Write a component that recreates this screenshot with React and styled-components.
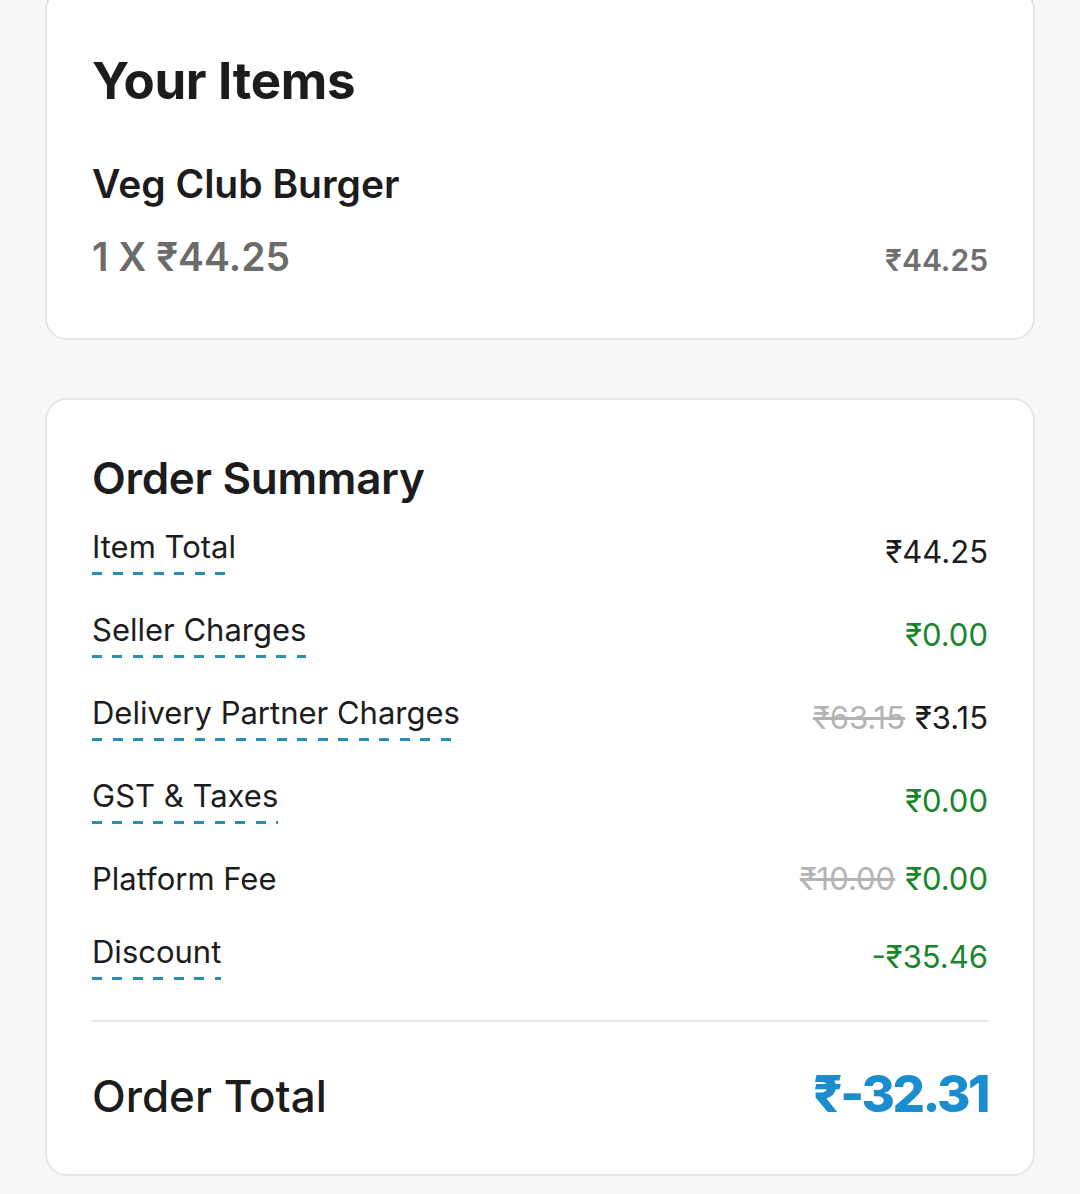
import React from 'react'
import styled, { createGlobalStyle } from 'styled-components'

const GlobalStyle = createGlobalStyle`
    body {
        margin: 0;
        background: #f7f7f7;
        font-family: Inter, "Noto Sans", sans-serif;
        color: #1c1c1c;
    }
`

const Page = styled.div`
    display: flex;
    flex-direction: column;
    gap: 58px;
    padding: 0 45px 20px 45px;
`

const Card = styled.section`
    background: #fff;
    border: 2px solid #e6e6e6;
    border-radius: 22px;
    padding: ${props => props.$pad};
    display: flex;
    flex-direction: column;
`

const FirstCard = styled(Card)`
    margin-top: -12px;
`

const CardTitle = styled.h2`
    margin: 0;
    font-size: ${props => props.$size}px;
    line-height: 1.2;
    font-weight: ${props => props.$weight};
    letter-spacing: -0.3px;
`

const ItemName = styled.div`
    margin-top: 50px;
    font-size: 39px;
    line-height: 46px;
    font-weight: 600;
`

const ItemRow = styled.div`
    margin-top: 27px;
    display: flex;
    justify-content: space-between;
    align-items: baseline;
`

const Qty = styled.span`
    font-size: 39px;
    line-height: 46px;
    font-weight: 600;
    color: #6b6b6b;
`

const ItemPrice = styled.span`
    font-size: 30px;
    font-weight: 600;
    color: #6f6f6f;
`

const Rows = styled.div`
    margin-top: 23px;
    display: flex;
    flex-direction: column;
    gap: 36px;
`

const Row = styled.div`
    display: flex;
    justify-content: space-between;
    align-items: center;
`

const Label = styled.span`
    font-size: 31px;
    line-height: 37px;
    color: #1c1c1c;
    align-self: flex-start;
    ${props => props.$dashed && `
        padding-bottom: 7px;
        border-bottom: 3px solid transparent;
        border-image: repeating-linear-gradient(to right, #2a8db4 0 10px, transparent 10px 20.5px) 0 0 1 0;
    `}
`

const Value = styled.span`
    font-size: 31px;
    line-height: 37px;
    color: ${props => props.$green ? '#17862a' : '#1c1c1c'};
    display: flex;
    gap: 10px;
`

const Struck = styled.s`
    color: #b3b3b3;
`

const Divider = styled.hr`
    margin: 40px 0 0 0;
    border: none;
    border-top: 2px solid #e6e6e6;
`

const TotalRow = styled.div`
    margin-top: 41px;
    display: flex;
    justify-content: space-between;
    align-items: baseline;
`

const TotalLabel = styled.span`
    font-size: 44px;
    font-weight: 500;
    line-height: 53px;
`

const TotalValue = styled.span`
    font-size: 51px;
    font-weight: 800;
    color: #1a8dcf;
    letter-spacing: -2.5px;
`

const charges = [
    { label: 'Item Total', dashed: true, value: '₹44.25' },
    { label: 'Seller Charges', dashed: true, value: '₹0.00', green: true },
    { label: 'Delivery Partner Charges', dashed: true, old: '₹63.15', value: '₹3.15' },
    { label: 'GST & Taxes', dashed: true, value: '₹0.00', green: true },
    { label: 'Platform Fee', old: '₹10.00', value: '₹0.00', green: true },
    { label: 'Discount', dashed: true, value: '-₹35.46', green: true },
]

function App() {
    return (
        <Page>
            <GlobalStyle />
            <FirstCard $pad="60px 45px 58px 45px">
                <CardTitle $size={51} $weight={700}>Your Items</CardTitle>
                <ItemName>Veg Club Burger</ItemName>
                <ItemRow>
                    <Qty>1 X ₹44.25</Qty>
                    <ItemPrice>₹44.25</ItemPrice>
                </ItemRow>
            </FirstCard>
            <Card $pad="52px 45px 50px 45px">
                <CardTitle $size={44} $weight={600}>Order Summary</CardTitle>
                <Rows>
                    {charges.map(c => (
                        <Row key={c.label}>
                            <Label $dashed={c.dashed}>{c.label}</Label>
                            <Value $green={c.green}>
                                {c.old && <Struck>{c.old}</Struck>}
                                <span>{c.value}</span>
                            </Value>
                        </Row>
                    ))}
                </Rows>
                <Divider />
                <TotalRow>
                    <TotalLabel>Order Total</TotalLabel>
                    <TotalValue>₹-32.31</TotalValue>
                </TotalRow>
            </Card>
        </Page>
    )
}

export default App
